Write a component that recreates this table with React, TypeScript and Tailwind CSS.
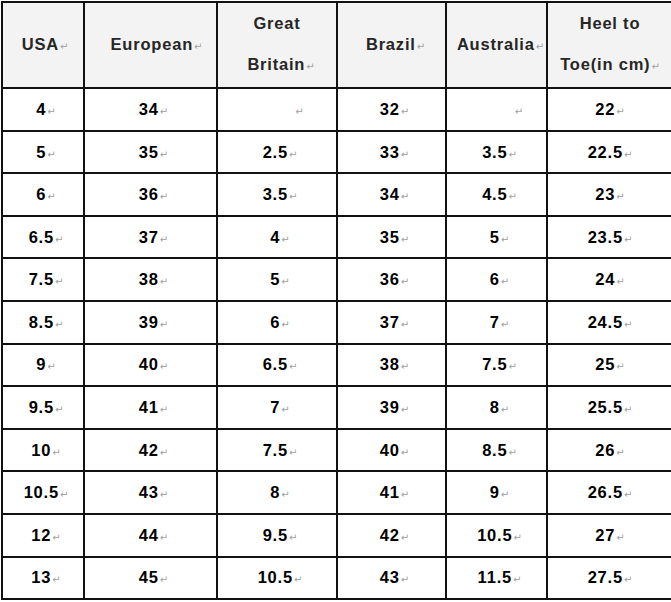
import React from 'react';

type Cell = string | null;

const rows: Cell[][] = [
  ['4', '34', null, '32', null, '22'],
  ['5', '35', '2.5', '33', '3.5', '22.5'],
  ['6', '36', '3.5', '34', '4.5', '23'],
  ['6.5', '37', '4', '35', '5', '23.5'],
  ['7.5', '38', '5', '36', '6', '24'],
  ['8.5', '39', '6', '37', '7', '24.5'],
  ['9', '40', '6.5', '38', '7.5', '25'],
  ['9.5', '41', '7', '39', '8', '25.5'],
  ['10', '42', '7.5', '40', '8.5', '26'],
  ['10.5', '43', '8', '41', '9', '26.5'],
  ['12', '44', '9.5', '42', '10.5', '27'],
  ['13', '45', '10.5', '43', '11.5', '27.5'],
];

// the little word-processor return mark after each cell
const Mark = () => (
  <span className="ml-px font-normal tracking-normal text-[10px] text-[#a0a0a0] [font-family:'DejaVu_Sans',sans-serif]">
    ↵
  </span>
);

const cellBorder = 'border-2 border-[#111] p-0';

const App: React.FC = () => {
  return (
    <div className="w-[671px] h-[602px] overflow-hidden bg-white pl-[1px] pt-[1px]">
      <table className="table-fixed border-collapse w-[700px] font-bold text-[16.5px] tracking-[0.8px] [font-family:'Liberation_Sans',Arial,sans-serif]">
        <colgroup>
          <col className="w-[82px]" />
          <col className="w-[133px]" />
          <col className="w-[120px]" />
          <col className="w-[109px]" />
          <col className="w-[101px]" />
          <col className="w-[155px]" />
        </colgroup>
        <thead>
          <tr className="h-[83px] bg-[#f3f3f3] text-[#262626] leading-[41px]">
            <th className={`${cellBorder} pl-1`}>
              USA<Mark />
            </th>
            <th className={`${cellBorder} pl-3`}>
              European<Mark />
            </th>
            <th className={cellBorder}>
              <div>Great</div>
              <div className="pl-2">
                Britain<Mark />
              </div>
            </th>
            <th className={`${cellBorder} pl-2`}>
              Brazil<Mark />
            </th>
            <th className={`${cellBorder} pl-2`}>
              Australia<Mark />
            </th>
            <th className={`${cellBorder} pr-[29px]`}>
              <div>Heel to</div>
              <div>
                Toe(in cm)<Mark />
              </div>
            </th>
          </tr>
        </thead>
        <tbody className="text-black">
          {rows.map((row, i) => (
            <tr key={i} className="h-[42.6px]">
              {row.map((v, j) => (
                <td
                  key={j}
                  className={`${cellBorder} text-center ${j === 5 ? 'pr-[29px]' : 'pl-1.5'}`}
                >
                  {v === null ? (
                    <span className="pl-[38px]">
                      <Mark />
                    </span>
                  ) : (
                    <>
                      {v}
                      <Mark />
                    </>
                  )}
                </td>
              ))}
            </tr>
          ))}
        </tbody>
      </table>
    </div>
  );
};

export default App;
